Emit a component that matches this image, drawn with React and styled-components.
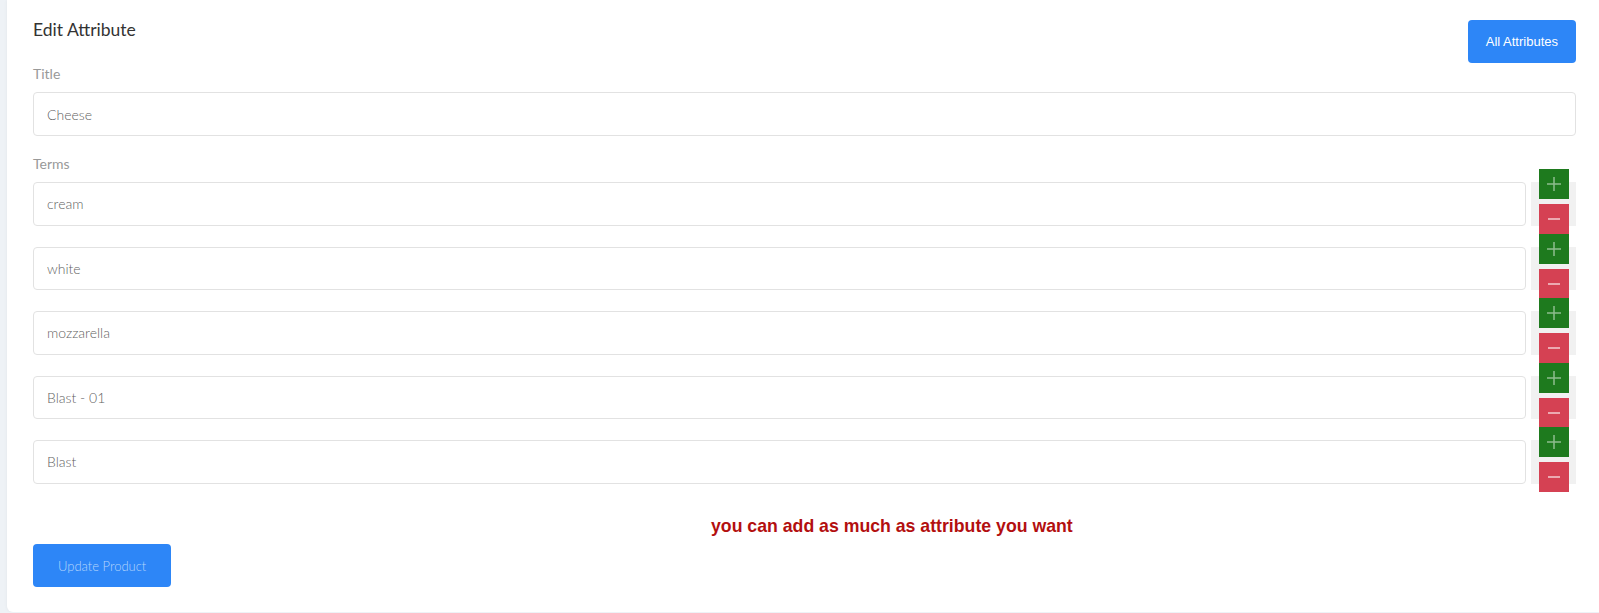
import styled, { createGlobalStyle } from "styled-components";

const GlobalStyle = createGlobalStyle`
   body {
      margin: 0;
      background-color: #eef2f6;
      font-family: "Lato", "Open Sans", sans-serif;
   }
`

const Page = styled.div`
   padding-left: 7px;
`

const Card = styled.div`
   background-color: white;
   border-radius: 0 0 0 6px;
   padding: 18px 23px 25px 26px;
   box-shadow: -1px 0 3px rgba(0, 0, 0, 0.03);
`

const Header = styled.div`
   display: flex;
   justify-content: space-between;
   align-items: flex-start;
`

const Heading = styled.h1`
   margin: 0;
   font-size: 17.5px;
   line-height: 24px;
   font-weight: 400;
   color: #333;
`

const Button = styled.button`
   height: 43px;
   padding: 0 ${props => props.wide ? "25px" : "18px"};
   margin-top: ${props => props.wide ? "0" : "2px"};
   border: none;
   border-radius: 4px;
   background-color: #2d86f7;
   color: ${props => props.wide ? "#b4d5fc" : "#fff"};
   font-family: ${props => props.wide ? "\"Lato\", sans-serif" : "\"Liberation Sans\", Arial, sans-serif"};
   font-size: 13px;
   font-weight: ${props => props.wide ? 300 : 400};
   cursor: pointer;
`

const Label = styled.div`
   margin-top: ${props => props.gap || "1px"};
   margin-bottom: 8px;
   font-size: 14px;
   line-height: 20px;
   color: #999;
`

const Input = styled.input`
   box-sizing: border-box;
   display: block;
   width: 100%;
   height: ${props => props.short ? "43.5px" : "44px"};
   border: 1px solid #e2e2e2;
   border-radius: 4px;
   padding: 0 13px;
   font-family: "Lato", sans-serif;
   font-size: 14px;
   font-weight: 300;
   color: #5f5f5f;
   outline: none;
   flex: 1;
`

const TermList = styled.div`
   display: flex;
   flex-direction: column;
   gap: 21px;
`

const TermRow = styled.div`
   display: flex;
   height: 43.5px;
`

const Append = styled.div`
   width: 45px;
   margin-left: 5px;
   background-color: #f1f1f1;
   display: flex;
   flex-direction: column;
   padding-left: 8px;
   box-sizing: border-box;
`

const Stack = styled.div`
   margin-top: -13px;
   display: flex;
   flex-direction: column;
   gap: 5px;
`

const IconButton = styled.button`
   width: 30px;
   height: 30px;
   padding: 0;
   border: none;
   display: flex;
   align-items: center;
   justify-content: center;
   background-color: ${props => props.danger ? "#d54153" : "#1e7a1e"};
   cursor: pointer;
`

const Note = styled.p`
   margin: 31px 0 7.5px;
   padding-left: 678px;
   font-family: "Liberation Sans", Arial, sans-serif;
   font-size: 17.7px;
   line-height: 22px;
   font-weight: 700;
   color: #b30f0f;
`

const terms = ["cream", "white", "mozzarella", "Blast - 01", "Blast"];

function Plus() {
   return (
      <svg width="14" height="14" viewBox="0 0 14 14">
         <path d="M7 0v14M0 7h14" stroke="rgba(255,255,255,0.5)" strokeWidth="1.5" />
      </svg>
   );
}

function Minus() {
   return (
      <svg width="14" height="14" viewBox="0 0 14 14">
         <path d="M1 7h12" stroke="rgba(255,255,255,0.55)" strokeWidth="2" />
      </svg>
   );
}

export default function App() {
   return (
      <Page>
         <GlobalStyle />
         <Card>
            <Header>
               <Heading>Edit Attribute</Heading>
               <Button>All Attributes</Button>
            </Header>
            <Label>Title</Label>
            <Input defaultValue="Cheese" />
            <Label gap="18px">Terms</Label>
            <TermList>
               {terms.map(term => (
                  <TermRow key={term}>
                     <Input short defaultValue={term} />
                     <Append>
                        <Stack>
                           <IconButton><Plus /></IconButton>
                           <IconButton danger><Minus /></IconButton>
                        </Stack>
                     </Append>
                  </TermRow>
               ))}
            </TermList>
            <Note>you can add as much as attribute you want</Note>
            <Button wide>Update Product</Button>
         </Card>
      </Page>
   );
}
